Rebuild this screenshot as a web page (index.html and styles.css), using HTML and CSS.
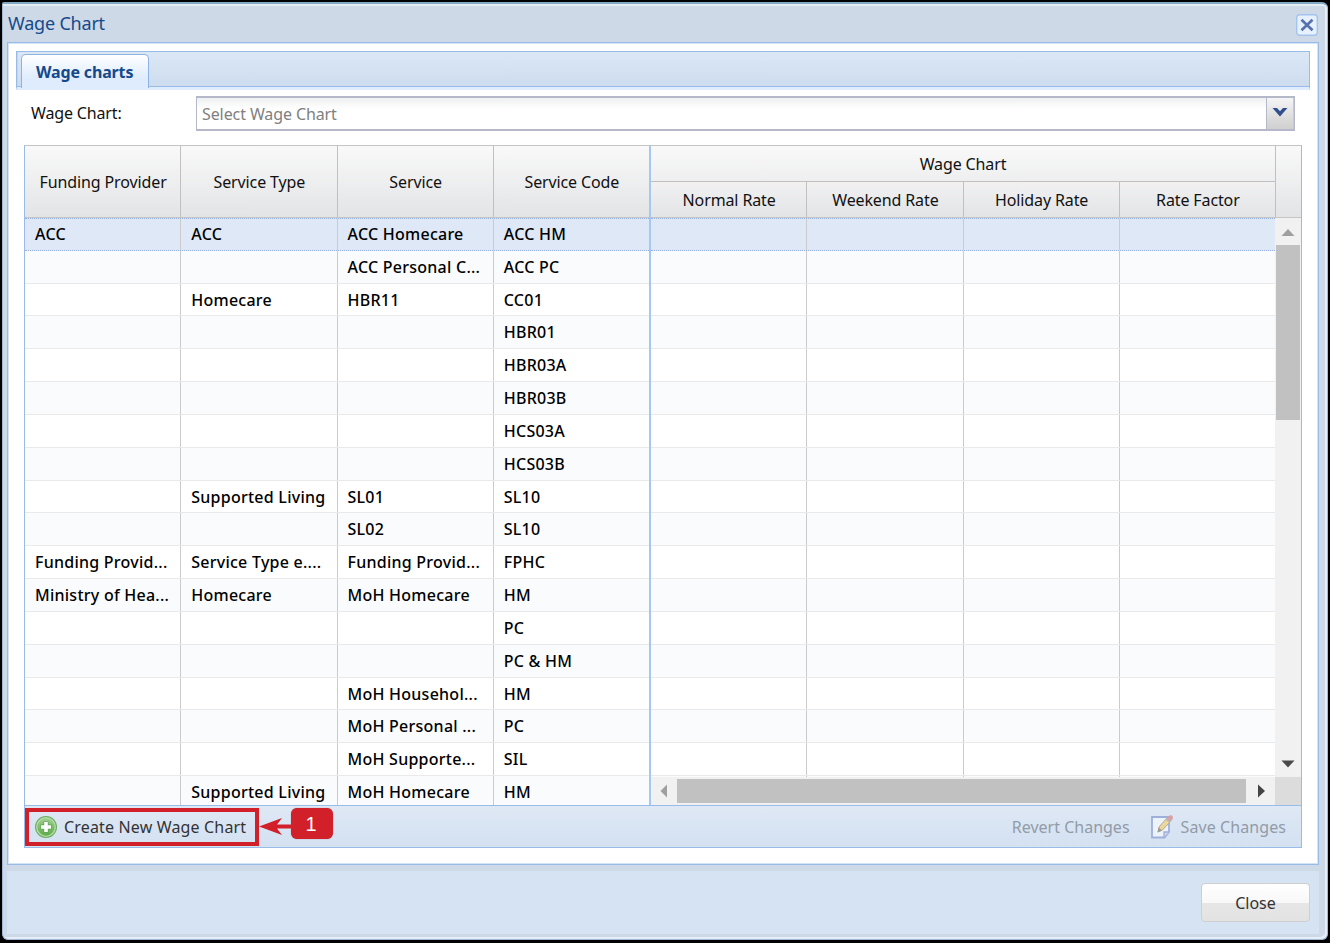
FILE: index.html
```
<!DOCTYPE html>
<html lang="en">
<head>
    <meta charset="UTF-8">
    <meta name="viewport" content="width=device-width, initial-scale=1.0">
    <title>Wage Chart</title>
    <link rel="stylesheet" href="styles.css">
</head>
<body>
    <div class="window">
        <div class="window-header">
            <span class="window-title">Wage Chart</span>
            <button class="close-tool" aria-label="Close">
                <svg width="22" height="22" viewBox="0 0 22 22">
                    <rect x="0.7" y="0.7" width="20.6" height="20.6" rx="3" fill="#e6f1fd" stroke="#a3c4ee" stroke-width="1.4"/>
                    <path d="M5.5 5.8L16.5 16.2M16.5 5.8L5.5 16.2" stroke="#5670b0" stroke-width="2.7"/>
                </svg>
            </button>
        </div>

        <div class="window-body">
            <div class="tab-bar">
                <div class="tab"><span class="tab-text">Wage charts</span></div>
            </div>

            <div class="form-row">
                <label class="form-label">Wage Chart:</label>
                <div class="combo">
                    <span class="combo-text">Select Wage Chart</span>
                    <div class="combo-trigger">
                        <svg width="16" height="11" viewBox="0 0 16 11">
                            <path d="M0.5 1H5L8 4.2L11 1H15.5L8 9.5Z" fill="#304f8c"/>
                        </svg>
                    </div>
                </div>
            </div>

            <div class="grid">
                <div class="grid-main">
                    <div class="locked">
                        <div class="locked-header">
                            <div class="head-cell"><span>Funding Provider</span></div>
                            <div class="head-cell"><span>Service Type</span></div>
                            <div class="head-cell"><span>Service</span></div>
                            <div class="head-cell"><span>Service Code</span></div>
                        </div>
                        <div class="locked-rows" id="lockedRows"></div>
                    </div>
                    <div class="normal">
                        <div class="normal-header">
                            <div class="group">
                                <div class="group-title">Wage Chart</div>
                                <div class="group-cols">
                                    <div class="head-cell"><span>Normal Rate</span></div>
                                    <div class="head-cell"><span>Weekend Rate</span></div>
                                    <div class="head-cell"><span>Holiday Rate</span></div>
                                    <div class="head-cell"><span>Rate Factor</span></div>
                                </div>
                            </div>
                        </div>
                        <div class="normal-body">
                            <div class="normal-rows" id="rateRows"></div>
                            <div class="scroll-v">
                                <svg class="scroll-up" width="26" height="27" viewBox="0 0 26 27"><path d="M6.5 18L13 11L19.5 18Z" fill="#9f9f9f"/></svg>
                                <div class="thumb-v"></div>
                                <svg class="scroll-down" width="26" height="26" viewBox="0 0 26 26"><path d="M6.5 9.5H19.5L13 16.5Z" fill="#4a4a4a"/></svg>
                            </div>
                        </div>
                        <div class="scroll-h">
                            <svg width="26" height="27" viewBox="0 0 26 27"><path d="M16 7.5V20.5L9.5 14Z" fill="#9f9f9f"/></svg>
                            <div class="thumb-h"></div>
                            <svg width="29" height="27" viewBox="0 0 29 27"><path d="M12 7.5V20.5L19 14Z" fill="#444"/></svg>
                            <div class="scroll-corner"></div>
                        </div>
                    </div>
                </div>

                <div class="toolbar">
                    <div class="create-btn">
                        <svg width="24" height="24" viewBox="0 0 24 24">
                            <defs>
                                <linearGradient id="green" x1="0" y1="0" x2="0" y2="1">
                                    <stop offset="0" stop-color="#a3cf93"/>
                                    <stop offset="1" stop-color="#5cab48"/>
                                </linearGradient>
                            </defs>
                            <circle cx="12" cy="12" r="11" fill="#69ae5c"/>
                            <circle cx="12" cy="12" r="9.3" fill="url(#green)" stroke="#b7dcab" stroke-width="1.3"/>
                            <path d="M12 6.5V17.5M6.5 12H17.5" stroke="#5b9f4c" stroke-width="5"/>
                            <path d="M12 7V17M7 12H17" stroke="#fff" stroke-width="3.6"/>
                        </svg>
                        <span class="create-text">Create New Wage Chart</span>
                    </div>
                    <svg class="arrow" width="34" height="20" viewBox="0 0 34 20">
                        <path d="M0 10.5L23 2L18 8.5H34V12.5H18L23 19Z" fill="#d2202a"/>
                    </svg>
                    <div class="step">1</div>
                    <div class="toolbar-right">
                        <span class="revert">Revert Changes</span>
                        <svg class="save-icon" width="24" height="25" viewBox="0 0 24 25">
                            <path d="M2 3H19V18L14.5 23.5H2Z" fill="#edf3fb" stroke="#9fb0d8" stroke-width="1.8"/>
                            <path d="M14 23V18H19" fill="#cbd7ee" stroke="#9fb0d8" stroke-width="1.4"/>
                            <path d="M8 18L9 13L17.5 3.5L21 6.8L12.5 16Z" fill="#ead8a0" stroke="#baa981"/>
                            <path d="M16.5 4.5L19 1.8Q21 .4 22.5 2Q23.8 3.7 22.3 5.5L20 7.8Z" fill="#d8a1a6"/>
                            <path d="M16 5L19.8 8.2" stroke="#b4b9c2" stroke-width="1.6"/>
                            <path d="M7.5 18.5L8.8 13.5L12 16.5Z" fill="#9a9a9a"/>
                        </svg>
                        <span class="save">Save Changes</span>
                    </div>
                </div>
            </div>
        </div>

        <div class="window-footer">
            <button class="close-btn">Close</button>
        </div>
    </div>

    <script>
        // Funding provider, service type, service, service code
        const rows = [
            ['ACC', 'ACC', 'ACC Homecare', 'ACC HM'],
            ['', '', 'ACC Personal C...', 'ACC PC'],
            ['', 'Homecare', 'HBR11', 'CC01'],
            ['', '', '', 'HBR01'],
            ['', '', '', 'HBR03A'],
            ['', '', '', 'HBR03B'],
            ['', '', '', 'HCS03A'],
            ['', '', '', 'HCS03B'],
            ['', 'Supported Living', 'SL01', 'SL10'],
            ['', '', 'SL02', 'SL10'],
            ['Funding Provid...', 'Service Type e....', 'Funding Provid...', 'FPHC'],
            ['Ministry of Hea...', 'Homecare', 'MoH Homecare', 'HM'],
            ['', '', '', 'PC'],
            ['', '', '', 'PC & HM'],
            ['', '', 'MoH Househol...', 'HM'],
            ['', '', 'MoH Personal ...', 'PC'],
            ['', '', 'MoH Supporte...', 'SIL'],
            ['', 'Supported Living', 'MoH Homecare', 'HM']
        ];

        function addRow(target, values, selected) {
            const row = document.createElement('div');
            row.className = selected ? 'row selected' : 'row';
            values.forEach(value => {
                const cell = document.createElement('div');
                cell.className = 'cell';
                cell.textContent = value;
                row.appendChild(cell);
            });
            target.appendChild(row);
        }

        rows.forEach((values, index) => {
            addRow(document.getElementById('lockedRows'), values, index === 0);
            addRow(document.getElementById('rateRows'), ['', '', '', ''], index === 0);
        });
    </script>
</body>
</html>
```
FILE: styles.css
```
* {
    box-sizing: border-box;
}
body {
    margin: 0;
    width: 1330px;
    height: 943px;
    padding: 2px 2px 3px 2px;
    overflow: hidden;
    background-color: #000;
    font-family: "Noto Sans", "Open Sans", sans-serif;
    font-size: 16px;
    color: #111;
}
svg {
    display: block;
    flex: none;
}
.window {
    height: 938px;
    display: flex;
    flex-direction: column;
    background-color: #ced9e7;
    border: 1px solid #a2b8d0;
    border-top: 2px solid #83aac5;
    border-radius: 2px 6px 6px 6px;
    box-shadow: inset 0 2px 0 #e4ecf5, inset -2px -2px 0 #e6eefa;
    padding: 0 8px 7px 4px;
}
.window-header {
    height: 38px;
    flex: none;
    display: flex;
    justify-content: space-between;
    padding: 10px 1px 0 1px;
}
.window-title {
    margin-top: -1px;
    font-size: 18px;
    line-height: 20px;
    letter-spacing: -0.2px;
    color: #154a8b;
}
.close-tool {
    width: 22px;
    height: 22px;
    padding: 0;
    border: none;
    background: none;
}
.window-body {
    height: 823px;
    flex: none;
    background-color: #fff;
    border: 1px solid #99bbe8;
    box-shadow: inset 0 0 0 1px #d3e3f8;
    padding: 8px 8px 0 8px;
}
.tab-bar {
    height: 39px;
    border: 1px solid #99bbe8;
    border-bottom: 3px solid #deecfd;
    background: linear-gradient(#dbe7f5, #cddcee);
    box-shadow: inset 0 -1px 0 #99bbe8, inset 1px 0 0 #c0d6f2;
    padding: 2px 0 0 4px;
}
.tab {
    width: 128px;
    height: 34px;
    border: 1px solid #8db3e3;
    border-bottom: none;
    border-radius: 5px 5px 0 0;
    background: linear-gradient(#fff, #deecfd 70%);
    padding-left: 14px;
    line-height: 35px;
    font-weight: bold;
    letter-spacing: -0.15px;
    color: #15498b;
}
.form-row {
    display: flex;
    padding: 6px 6px 0 15px;
}
.form-label {
    width: 165px;
    line-height: 34px;
    letter-spacing: -0.15px;
}
.combo {
    width: 1099px;
    height: 35px;
    display: flex;
    justify-content: space-between;
    border: 1px solid #b5b8c8;
    border-width: 2px 1px;
    background: linear-gradient(#eef0f1, #fff 35%);
}
.combo-text {
    padding-left: 5px;
    line-height: 32px;
    letter-spacing: -0.1px;
    color: #808080;
}
.combo-trigger {
    width: 28px;
    border-left: 1px solid #b5b8c8;
    border-right: 1px solid #c6c8d2;
    background: linear-gradient(#f5f5f5, #cfcfcf);
    padding: 9px 0 0 5px;
}
.grid {
    width: 1278px;
    height: 703px;
    margin: 14px 0 0 8px;
    border: 1px solid #99bbe8;
    border-top-color: #c5c5c5;
}
.grid-main {
    height: 659px;
    display: flex;
}
.locked {
    width: 626px;
    display: flex;
    flex-direction: column;
    border-right: 2px solid #a6c8f0;
}
.normal {
    width: 650px;
    display: flex;
    flex-direction: column;
}
.locked-header, .normal-header {
    height: 72px;
    flex: none;
    border-bottom: 1px solid #c5c5c5;
    background: linear-gradient(#f9f9f9, #e3e4e6);
}
.locked-header {
    display: flex;
}
.head-cell {
    flex: 1 1 0;
    display: flex;
    align-items: center;
    justify-content: center;
    border-right: 1px solid #c0c0c0;
    padding-left: 1px;
    letter-spacing: -0.12px;
}
.locked-header .head-cell {
    padding-top: 1px;
}
.locked-header .head-cell:last-child, .group-cols .head-cell:last-child {
    border-right: none;
}
.group {
    width: 625px;
    height: 71px;
    border-right: 1px solid #c0c0c0;
}
.group-title {
    height: 36px;
    line-height: 36px;
    text-align: center;
    letter-spacing: -0.12px;
    border-bottom: 1px solid #c0c0c0;
}
.group-cols {
    height: 35px;
    display: flex;
    background: linear-gradient(#f1f1f2, #e3e4e6);
}
.locked-rows, .normal-rows {
    flex: 1;
    min-height: 0;
    overflow: hidden;
}
.normal-body {
    height: 559px;
    flex: none;
    display: flex;
}
.row {
    height: 32.84px;
    display: flex;
    border-bottom: 1px solid #e9e9ea;
    background-color: #fff;
}
.row:nth-child(even) {
    background-color: #fafbfd;
}
.row.selected {
    background-color: #dfe8f6;
    border-top: 1px dotted #95b1e3;
    border-bottom: 1px dotted #95b1e3;
}
.cell {
    flex: 1 1 0;
    min-width: 0;
    padding-left: 10px;
    border-right: 1px solid #cbcbcb;
    line-height: 32px;
    font-weight: 500;
    letter-spacing: 0.25px;
    color: #000;
    white-space: nowrap;
    overflow: hidden;
}
.selected .cell {
    line-height: 30px;
}
.cell:last-child {
    border-right: none;
}
.scroll-v {
    width: 26px;
    display: flex;
    flex-direction: column;
    background-color: #f1f1f1;
}
.thumb-v {
    width: 24px;
    height: 175px;
    margin-left: 1px;
    background-color: #c1c1c1;
}
.scroll-down {
    margin-top: auto;
}
.scroll-h {
    height: 28px;
    display: flex;
    background-color: #f1f1f1;
}
.thumb-h {
    width: 569px;
    height: 24px;
    margin-top: 2px;
    background-color: #c1c1c1;
}
.scroll-corner {
    width: 26px;
    background-color: #dcdcdc;
}
.toolbar {
    height: 42px;
    display: flex;
    border-top: 1px solid #99bbe8;
    background: linear-gradient(#dfe8f5, #d3e1f1);
}
.create-btn {
    width: 234px;
    height: 38px;
    margin-top: 2px;
    display: flex;
    align-items: center;
    border: 4px solid #d2202a;
    padding-left: 5px;
    color: #333;
}
.create-text {
    padding-left: 6px;
    letter-spacing: 0.16px;
    white-space: nowrap;
}
.arrow {
    margin-top: 10px;
}
.step {
    width: 42px;
    height: 31px;
    margin: 2px 0 0 -2px;
    padding-right: 2px;
    border-radius: 6px;
    background-color: #d2202a;
    box-shadow: 0 0 1px #8b5a5c;
    color: #fff;
    font-family: "Liberation Sans", Arial, sans-serif;
    font-size: 20px;
    line-height: 32px;
    text-align: center;
}
.toolbar-right {
    display: flex;
    margin-left: auto;
    padding-right: 15px;
    line-height: 43px;
    color: #929ba8;
}
.save {
    letter-spacing: 0.08px;
}
.save-icon {
    margin: 8px 7px 0 20px;
}
.window-footer {
    height: 63px;
    flex: none;
    display: flex;
    justify-content: flex-end;
    margin: 6px 0 0 0;
    padding: 12px 9px 0 0;
    background-color: #d6e3f2;
}
.close-btn {
    width: 109px;
    height: 39px;
    border: 1px solid #cfcfcf;
    border-radius: 4px;
    background: linear-gradient(#fff, #f8f8f8 50%, #e6e6e6 51%, #e3e3e3);
    font-family: inherit;
    font-size: 16px;
    color: #333;
}
```
